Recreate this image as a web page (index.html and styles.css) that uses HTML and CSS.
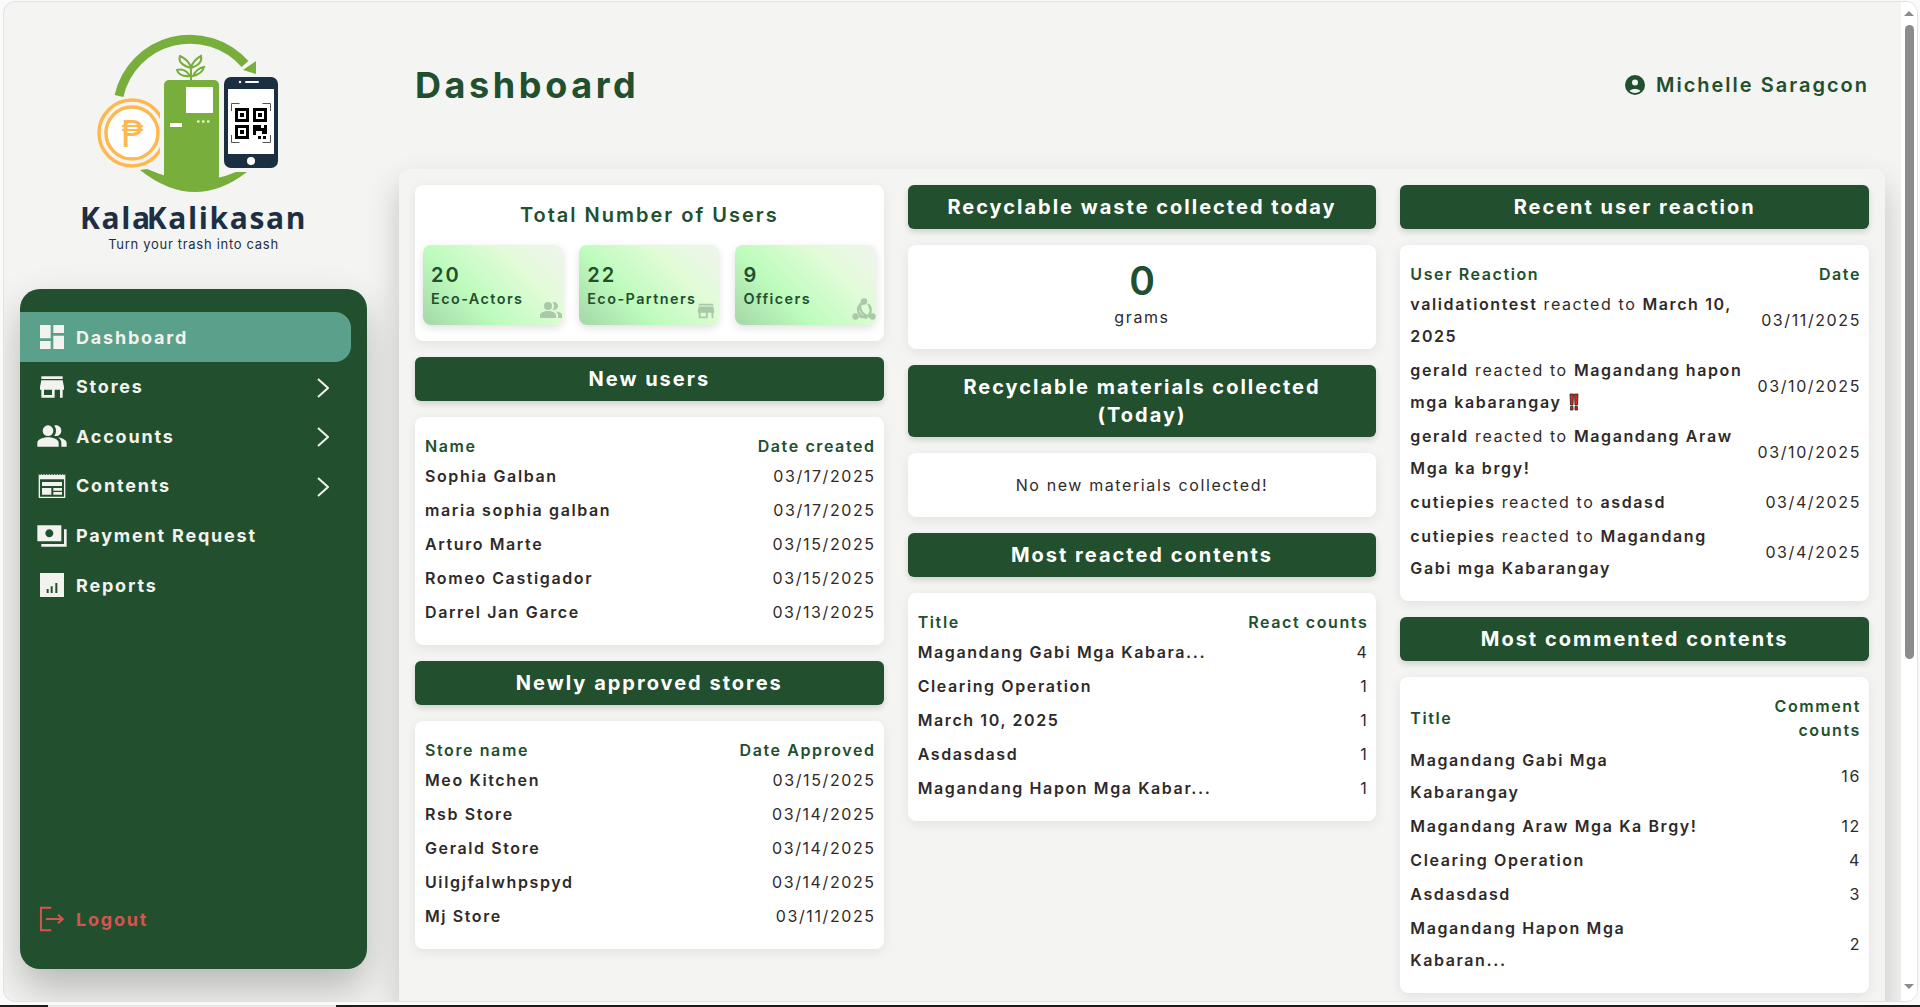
FILE: index.html
```html
<!DOCTYPE html>
<html lang="en">
<head>
<meta charset="UTF-8" />
<meta name="viewport" content="width=device-width, initial-scale=1" />
<title>Dashboard</title>
<link rel="stylesheet" href="styles.css">
</head>
<body>

<div class="window">
  <aside class="side">
    <div class="brand">
      <svg class="logo" viewBox="90 30 195 165" width="195" height="165">
        <path d="M118 94 A73 73 0 0 1 244 62" fill="none" stroke="#78ae3c" stroke-width="9"/>
        <polygon points="242,68 255,59 255,72" fill="#78ae3c"/>
        <path d="M139 168 Q193 211 246 170 L235 170 Q193 188 146 167Z" fill="#78ae3c"/>
        <path d="M190 78V66M190 66Q188 58 179 54Q176 62 190 66ZM190 66Q192 58 200 54Q202 62 190 66ZM189 74Q184 66 176 68Q178 75 189 74ZM192 74Q196 66 203 65Q201 72 192 74Z" fill="none" stroke="#78ae3c" stroke-width="2"/>
        <circle cx="131" cy="131" r="33" fill="none" stroke="#fdb94f" stroke-width="3.5"/>
        <circle cx="131" cy="131" r="26" fill="#fff" stroke="#fdb94f" stroke-width="3.5"/>
        <rect x="159" y="90" width="4" height="82" fill="#f4f4f2"/>
        <text x="132" y="145" text-anchor="middle" class="peso">₱</text>
        <path d="M163 182V83a5 5 0 0 1 5-5h45a5 5 0 0 1 5 5v99Z" fill="#78ae3c"/>
        <rect x="185" y="85" width="27" height="26" fill="#fff"/>
        <rect x="169" y="121" width="12" height="4" fill="#fff"/>
        <path d="M196 119.500h2.500M201 119.500h2.500M206 119.500h2.500" stroke="#fff" stroke-width="2"/>
        <rect x="223" y="75" width="54" height="91" rx="7" fill="#1b2f42"/>
        <rect x="227" y="87" width="46" height="65" fill="#fff"/>
        <circle cx="250" cy="159" r="4" fill="#fff"/>
        <circle cx="239" cy="80" r="1.200" fill="#fff"/>
        <rect x="244" y="79" width="14" height="2" rx="1" fill="#fff"/>
        <path d="M230.500 109v-7.500h8M261.500 101.500h8v7.500M269.500 133v7.500h-8M238.500 140.500h-8v-7.500" fill="none" stroke="#555" stroke-width="1"/>
        <path d="M234 106h14v14h-14ZM237 109v8h8v-8ZM252 106h14v14h-14ZM255 109v8h8v-8ZM234 123h14v14h-14ZM237 126v8h8v-8Z" fill="#000" fill-rule="evenodd"/>
        <rect x="239" y="111" width="4" height="4" fill="#000"/>
        <rect x="257" y="111" width="4" height="4" fill="#000"/>
        <rect x="239" y="128" width="4" height="4" fill="#000"/>
        <path d="M252 123h8v3h3v-3h3v9h-5v-3h-6v4h-3ZM257 134h3v3h-3ZM262 134h3v3h-3Z" fill="#000"/>
      </svg>
      <div class="brand-name"><span class="kala">Kala</span>Kalikasan</div>
      <div class="brand-tag">Turn your trash into cash</div>
    </div>
    <nav class="menu">
      <a class="menu-item active">
        <svg class="ico" viewBox="0 0 24 24"><path d="M3 13h8V3H3v10zm0 8h8v-6H3v6zm10 0h8V11h-8v10zm0-18v6h8V3h-8z"/></svg>
        <span>Dashboard</span>
      </a>
      <a class="menu-item">
        <svg class="ico" viewBox="0 0 24 24"><path d="M20 4H4v2h16V4zm1 10v-2l-1-5H4l-1 5v2h1v6h10v-6h4v6h2v-6h1zm-9 4H6v-4h6v4z"/></svg>
        <span>Stores</span>
        <svg class="chev" viewBox="0 0 12 20"><path d="M1 1l10 9-10 9"/></svg>
      </a>
      <a class="menu-item">
        <svg class="ico" viewBox="0 0 24 24"><path d="M16.670 13.130C18.040 14.060 19 15.320 19 17v3h4v-3c0-2.180-3.570-3.470-6.330-3.870z"/><circle cx="9" cy="8" r="4"/><path d="M15 12c2.210 0 4-1.790 4-4s-1.790-4-4-4c-.47 0-.91.1-1.330.24C14.500 5.270 15 6.580 15 8s-.5 2.730-1.330 3.760c.42.14.86.24 1.330.24zM9 13c-2.670 0-8 1.340-8 4v3h16v-3c0-2.660-5.330-4-8-4z"/></svg>
        <span>Accounts</span>
        <svg class="chev" viewBox="0 0 12 20"><path d="M1 1l10 9-10 9"/></svg>
      </a>
      <a class="menu-item">
        <svg class="ico" viewBox="0 0 24 24"><path fill-rule="evenodd" d="M2 3l1 1 1-1 1 1 1-1 1 1 1-1 1 1 1-1 1 1 1-1 1 1 1-1 1 1 1-1 1 1 1-1 1 1 1-1 1 1 1-1v18H2zM3 7v13h18V7zM4.500 9h15v3h-15zM4.500 13.500h7V18.500h-7zM13 13.500h6.500v2h-6.500zM13 16.500h6.500v2h-6.500z"/></svg>
        <span>Contents</span>
        <svg class="chev" viewBox="0 0 12 20"><path d="M1 1l10 9-10 9"/></svg>
      </a>
      <a class="menu-item">
        <svg class="ico" viewBox="0 0 24 24"><path d="M19 16V4H1v12h18zm-9-3c-1.660 0-3-1.340-3-3s1.340-3 3-3 3 1.340 3 3-1.340 3-3 3zm13-6v13H4v-2h17V7h2z"/></svg>
        <span>Payment Request</span>
      </a>
      <a class="menu-item">
        <svg class="ico" viewBox="0 0 24 24"><path fill-rule="evenodd" d="M3 3h18v18H3zM8 15v3h1.500v-3zM11 13v5h1.500v-5zM14.500 10.500v7.500h1.500v-7.500z"/></svg>
        <span>Reports</span>
      </a>
      <a class="menu-item logout">
        <svg class="ico" viewBox="0 0 24 24"><path d="M11.500 3.500H3.700v17h7.800M7.500 12h12.500M16.500 8.800L20 12l-3.500 3.200" fill="none" stroke="#d9534f" stroke-width="1.500"/></svg>
        <span>Logout</span>
      </a>
    </nav>
  </aside>

  <div class="main">
    <header class="top">
      <h1>Dashboard</h1>
      <div class="user">
        <svg class="user-ico" viewBox="2 2 20 20"><circle cx="12" cy="12" r="10" fill="#224f2d"/><circle cx="12" cy="9.500" r="3" fill="#f4f4f2"/><path d="M6.500 17.800C8 16.500 10 16 12 16s4 .5 5.500 1.800C16 19.200 14 20 12 20s-4-.8-5.500-2.200z" fill="#f4f4f2"/></svg>
        <span>Michelle Saragcon</span>
      </div>
    </header>

    <section class="panel">
      <div class="col">
        <div class="card stats">
          <h2 class="stats-title">Total Number of Users</h2>
          <div class="tiles">
            <div class="tile">
              <div class="tile-num">20</div>
              <div class="tile-label">Eco-Actors</div>
              <svg class="tile-ico" viewBox="0 0 24 24"><path d="M16.670 13.130C18.040 14.060 19 15.320 19 17v3h4v-3c0-2.180-3.570-3.470-6.330-3.870z"/><circle cx="9" cy="8" r="4"/><path d="M15 12c2.210 0 4-1.790 4-4s-1.790-4-4-4c-.47 0-.91.1-1.330.24C14.500 5.270 15 6.580 15 8s-.5 2.730-1.330 3.760c.42.14.86.24 1.330.24zM9 13c-2.670 0-8 1.340-8 4v3h16v-3c0-2.660-5.330-4-8-4z"/></svg>
            </div>
            <div class="tile">
              <div class="tile-num">22</div>
              <div class="tile-label">Eco-Partners</div>
              <svg class="tile-ico store" viewBox="0 0 24 24"><path d="M20 4H4v2h16V4zm1 10v-2l-1-5H4l-1 5v2h1v6h10v-6h4v6h2v-6h1zm-9 4H6v-4h6v4z"/></svg>
            </div>
            <div class="tile">
              <div class="tile-num">9</div>
              <div class="tile-label">Officers</div>
              <svg class="tile-ico" viewBox="0 0 24 24"><circle cx="12" cy="3.500" r="3.200"/><circle cx="3.500" cy="18.500" r="3.200"/><circle cx="20.500" cy="18.500" r="3.200"/><path d="M12 5C8 6 6 9 6 12s3 7 9 8M7 18c4 2 8 1 10-1s3-7-1-11M9 5c-2 3-1 9 4 12s6 1 7-1" fill="none" stroke="currentColor" stroke-width="2.400"/></svg>
            </div>
          </div>
        </div>

        <h3 class="bar">New users</h3>
        <div class="card">
          <table class="list">
            <tr><th>Name</th><th class="r">Date created</th></tr>
            <tr><td class="b">Sophia Galban</td><td class="r">03/17/2025</td></tr>
            <tr><td class="b">maria sophia galban</td><td class="r">03/17/2025</td></tr>
            <tr><td class="b">Arturo Marte</td><td class="r">03/15/2025</td></tr>
            <tr><td class="b">Romeo Castigador</td><td class="r">03/15/2025</td></tr>
            <tr><td class="b">Darrel Jan Garce</td><td class="r">03/13/2025</td></tr>
          </table>
        </div>

        <h3 class="bar">Newly approved stores</h3>
        <div class="card">
          <table class="list">
            <tr><th>Store name</th><th class="r">Date Approved</th></tr>
            <tr><td class="b">Meo Kitchen</td><td class="r">03/15/2025</td></tr>
            <tr><td class="b">Rsb Store</td><td class="r">03/14/2025</td></tr>
            <tr><td class="b">Gerald Store</td><td class="r">03/14/2025</td></tr>
            <tr><td class="b">Uilgjfalwhpspyd</td><td class="r">03/14/2025</td></tr>
            <tr><td class="b">Mj Store</td><td class="r">03/11/2025</td></tr>
          </table>
        </div>
      </div>

      <div class="col">
        <h3 class="bar">Recyclable waste collected today</h3>
        <div class="card grams">
          <div class="grams-num">0</div>
          <div class="grams-unit">grams</div>
        </div>

        <h3 class="bar">Recyclable materials collected (Today)</h3>
        <div class="card empty">No new materials collected!</div>

        <h3 class="bar">Most reacted contents</h3>
        <div class="card">
          <table class="list">
            <tr><th>Title</th><th class="r">React counts</th></tr>
            <tr><td class="b">Magandang Gabi Mga Kabara...</td><td class="r">4</td></tr>
            <tr><td class="b">Clearing Operation</td><td class="r">1</td></tr>
            <tr><td class="b">March 10, 2025</td><td class="r">1</td></tr>
            <tr><td class="b">Asdasdasd</td><td class="r">1</td></tr>
            <tr><td class="b">Magandang Hapon Mga Kabar...</td><td class="r">1</td></tr>
          </table>
        </div>
      </div>

      <div class="col">
        <h3 class="bar">Recent user reaction</h3>
        <div class="card">
          <table class="list reactions">
            <tr><th>User Reaction</th><th class="r">Date</th></tr>
            <tr><td><b>validationtest</b> reacted to <b>March 10, 2025</b></td><td class="r">03/11/2025</td></tr>
            <tr><td><b>gerald</b> reacted to <b>Magandang hapon mga kabarangay <svg class="bang" viewBox="0 0 10 18"><path d="M1 1h3.500l-.5 11H1.500zM5.500 1H9l-.5 11H6zM1.500 13.500h2.500V17H1.500zM6 13.500h2.500V17H6z" fill="#d8261c" stroke="#222" stroke-width=".8"/></svg></b></td><td class="r">03/10/2025</td></tr>
            <tr><td><b>gerald</b> reacted to <b>Magandang Araw Mga ka brgy!</b></td><td class="r">03/10/2025</td></tr>
            <tr><td><b>cutiepies</b> reacted to <b>asdasd</b></td><td class="r">03/4/2025</td></tr>
            <tr><td><b>cutiepies</b> reacted to <b>Magandang Gabi mga Kabarangay</b></td><td class="r">03/4/2025</td></tr>
          </table>
        </div>

        <h3 class="bar">Most commented contents</h3>
        <div class="card">
          <table class="list">
            <tr><th>Title</th><th class="r">Comment counts</th></tr>
            <tr><td class="b">Magandang Gabi Mga Kabarangay</td><td class="r">16</td></tr>
            <tr><td class="b">Magandang Araw Mga Ka Brgy!</td><td class="r">12</td></tr>
            <tr><td class="b">Clearing Operation</td><td class="r">4</td></tr>
            <tr><td class="b">Asdasdasd</td><td class="r">3</td></tr>
            <tr><td class="b">Magandang Hapon Mga Kabaran...</td><td class="r">2</td></tr>
          </table>
        </div>
      </div>
    </section>
  </div>

  <div class="scroll">
    <span class="arrow up"></span>
    <span class="thumb"></span>
    <span class="arrow down"></span>
  </div>
</div>

<div class="strip"><span class="gap"></span></div>

</body>
</html>
```

FILE: styles.css
```css
html, body {
  height: 100%;
}
body {
  margin: 0;
  height: 1007px;
  overflow: hidden;
  background: #fafafa;
  font-family: Inter, "Liberation Sans", sans-serif;
  color: #2f2a2a;
  display: flex;
  flex-direction: column;
}

.window {
  flex: 1;
  min-height: 0;
  margin: 1px 2px 3px 3px;
  border: 1px solid #e2e2e2;
  border-radius: 12px;
  background: #f4f4f2;
  display: flex;
  overflow: hidden;
}

.strip {
  height: 2px;
  background: #1c1c1c;
  padding-left: 48px;
  display: flex;
}
.gap {
  width: 288px;
  background: #e8e8e8;
}

/* sidebar */
.side {
  width: 395px;
  flex: none;
  box-sizing: border-box;
  padding: 0 32px 32px 16px;
  display: flex;
  flex-direction: column;
}
.brand {
  height: 287px;
  text-align: center;
  color: #1c2f45;
}
.logo {
  display: block;
  margin: 30px 0 0 71px;
}
.peso {
  font-family: "DejaVu Sans", sans-serif;
  font-size: 38px;
  fill: #fdb94f;
}
.brand-name {
  font-family: "Open Sans", sans-serif;
  font-size: 30px;
  font-weight: 700;
  line-height: 34px;
  letter-spacing: 1.600px;
  margin-top: 4px;
}
.kala {
  margin-right: -5px;
}
.brand-tag {
  font-size: 13px;
  line-height: 16px;
  letter-spacing: .7px;
  margin-top: 1px;
}

.menu {
  flex: 1;
  background: #224f2d;
  border-radius: 20px;
  padding-top: 23.400px;
  box-shadow: 0 20px 40px rgba(0, 0, 0, .25);
  display: flex;
  flex-direction: column;
}
.menu-item {
  height: 49.6px;
  margin-right: 16px;
  padding-left: 16px;
  box-sizing: border-box;
  border-radius: 0 16px 16px 0;
  display: flex;
  align-items: center;
  gap: 8px;
  font-size: 18px;
  font-weight: 700;
  letter-spacing: 1.800px;
  color: #f2f2ee;
}
.menu-item.active {
  background: #5aa08a;
}
.menu-item .ico {
  width: 32px;
  height: 32px;
  flex: none;
  fill: currentColor;
}
.chev {
  width: 12px;
  height: 20px;
  margin: 2px 22px 0 auto;
  fill: none;
  stroke: currentColor;
  stroke-width: 2;
}
.logout {
  margin-top: auto;
  margin-bottom: 25px;
  color: #d9534f;
}

/* main area */
.main {
  flex: 1;
  min-width: 0;
  padding-right: 16px;
  display: flex;
  flex-direction: column;
}
.top {
  height: 167px;
  flex: none;
  box-sizing: border-box;
  padding: 0 16px 2px;
  display: flex;
  align-items: center;
  justify-content: space-between;
}
.top h1 {
  margin: 0;
  font-size: 36px;
  font-weight: 700;
  letter-spacing: 3.600px;
  color: #224f2d;
}
.user {
  display: flex;
  align-items: center;
  gap: 11px;
  font-size: 20px;
  font-weight: 600;
  letter-spacing: 2px;
  color: #224f2d;
}
.user-ico {
  width: 20px;
  height: 20px;
}

.panel {
  flex: 1;
  padding: 16px;
  border-radius: 10px 10px 0 0;
  background: #f4f4f2;
  box-shadow: 0 16px 32px rgba(0, 0, 0, .2);
  display: grid;
  grid-template-columns: repeat(3, minmax(0, 1fr));
  gap: 24px;
  align-items: start;
}
.col {
  display: flex;
  flex-direction: column;
  gap: 16px;
}

.bar {
  margin: 0;
  padding: 8px 16px;
  background: #224f2d;
  border-radius: 6px;
  color: #fff;
  font-size: 20px;
  font-weight: 700;
  line-height: 28px;
  letter-spacing: 2px;
  text-align: center;
  box-shadow: 0 3px 6px rgba(0, 0, 0, .15);
}

.card {
  background: #fff;
  border-radius: 8px;
  padding: 15px 6px 15px 8px;
  box-shadow: 0 3px 12px rgba(0, 0, 0, .08);
}

/* total users */
.stats {
  padding: 16px 8px;
}
.stats-title {
  margin: 0 0 16px;
  font-size: 20px;
  font-weight: 600;
  line-height: 28px;
  letter-spacing: 2px;
  text-align: center;
  color: #224f2d;
}
.tiles {
  display: grid;
  grid-template-columns: repeat(3, minmax(0, 1fr));
  gap: 16px;
}
.tile {
  position: relative;
  height: 80px;
  box-sizing: border-box;
  padding: 17px 8px 0;
  border-radius: 8px;
  background: linear-gradient(45deg, #a4d6a8 0%, #bdfcbc 35%, #e2fbd8 70%, #f0f4ee 100%);
  box-shadow: 0 3px 8px rgba(0, 0, 0, .12);
  color: #224f2d;
}
.tile-num {
  font-size: 20px;
  font-weight: 600;
  line-height: 26px;
  letter-spacing: 2px;
}
.tile-label {
  font-size: 14.400px;
  font-weight: 600;
  line-height: 22px;
  letter-spacing: 1.440px;
}
.tile-ico {
  position: absolute;
  right: 0;
  bottom: 3px;
  width: 24px;
  height: 24px;
  fill: currentColor;
  color: #a9c9a9;
}
.tile-ico.store {
  right: 2px;
  bottom: 3px;
  width: 22px;
  height: 22px;
}

/* tables */
.list {
  width: 100%;
  border-spacing: 2px;
  font-size: 16px;
  letter-spacing: 1.600px;
}
.list th {
  padding: 0;
  text-align: left;
  font-size: 16px;
  font-weight: 600;
  line-height: 24px;
  color: #224f2d;
}
.list td {
  padding: 0;
  line-height: 32px;
  font-weight: 400;
}
.list .b, .list b {
  font-weight: 600;
}
.list .r {
  text-align: right;
}
.reactions td:first-child {
  padding-right: 8px;
}
.bang {
  width: 10px;
  height: 18px;
  margin-left: 2px;
  vertical-align: -3px;
}

/* single number cards */
.grams {
  height: 104px;
  box-sizing: border-box;
  padding: 14px 8px 0;
  text-align: center;
}
.grams-num {
  font-size: 39px;
  font-weight: 600;
  line-height: 44px;
  color: #224f2d;
}
.grams-unit {
  font-size: 16px;
  line-height: 24px;
  letter-spacing: 1.600px;
  margin-top: 2px;
}
.empty {
  height: 64px;
  box-sizing: border-box;
  padding: 0;
  text-align: center;
  line-height: 64px;
  font-size: 16px;
  letter-spacing: 1.600px;
}

/* window scrollbar */
.scroll {
  width: 16px;
  flex: none;
  background: #fff;
  position: relative;
  display: flex;
  flex-direction: column;
  align-items: center;
}
.thumb {
  position: absolute;
  top: 23px;
  height: 634px;
  width: 9px;
  border-radius: 5px;
  background: #8b8b8b;
}
.arrow {
  position: absolute;
  width: 0;
  height: 0;
  border-left: 5px solid transparent;
  border-right: 5px solid transparent;
}
.arrow.up {
  top: 9px;
  border-bottom: 5px solid #8b8b8b;
}
.arrow.down {
  bottom: 12px;
  border-top: 5px solid #8b8b8b;
}
```
